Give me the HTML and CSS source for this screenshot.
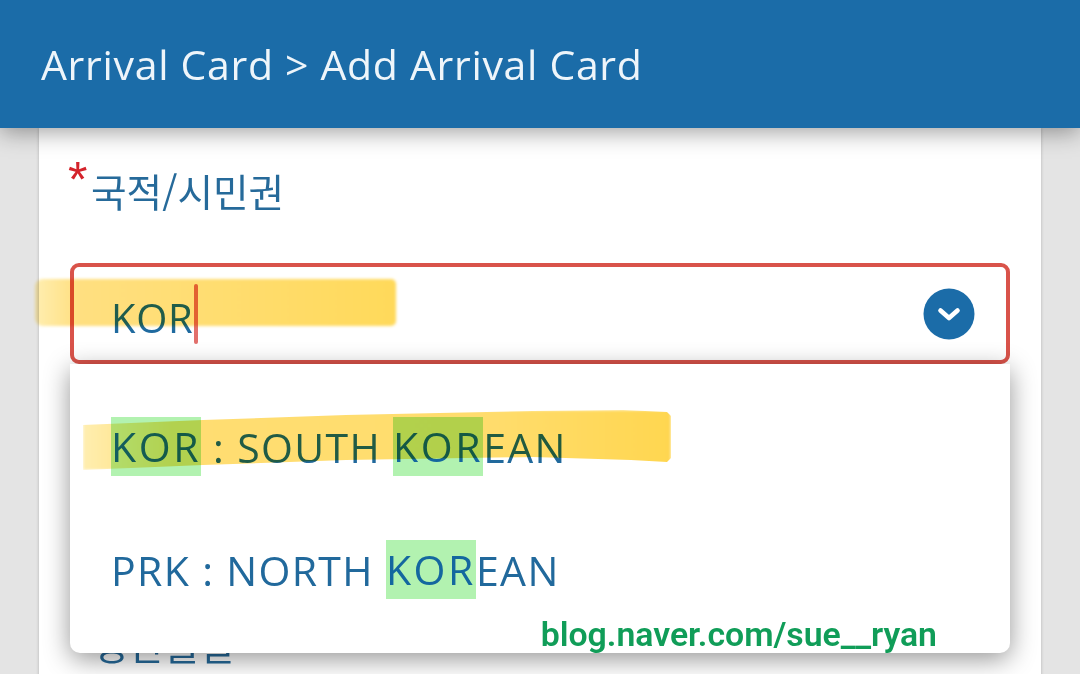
FILE: index.html
```html
<!DOCTYPE html>
<html lang="ko">
<head>
<meta charset="utf-8">
<title>Add Arrival Card</title>
<link rel="stylesheet" href="styles.css">
</head>
<body>
<div class="screen">
  <header class="topbar">Arrival Card &gt; Add Arrival Card</header>
  <main class="card">
    <div class="label"><span class="req">*</span>국적/시민권</div>
    <div class="field-wrap">
      <div class="input">
        <span class="value">KOR<span class="caret"></span></span>
        <svg class="chev" width="52" height="52" viewBox="0 0 52 52" aria-hidden="true">
          <circle cx="26" cy="26" r="25.5" fill="#1b6ca8"/>
          <path d="M17.5 22.5 L26 30 L34.5 22.5" fill="none" stroke="#fff" stroke-width="4.6" stroke-linecap="round" stroke-linejoin="round"/>
        </svg>
      </div>
      <span class="marker marker-a"></span>
      <div class="menu">
        <div class="option"><mark>KOR</mark> : SOUTH <mark>KOR</mark>EAN</div>
        <div class="option"><span class="code">PRK</span> : NORTH <mark>KOR</mark>EAN</div>
        <span class="marker marker-b"></span>
        <span class="credit">blog.naver.com/sue__ryan</span>
      </div>
    </div>
    <div class="label label-next">생년월일</div>
  </main>
</div>
</body>
</html>
```
FILE: styles.css
```css
html, body {
  margin: 0;
  padding: 0;
  background: #e4e4e4;
}
.screen {
  position: relative;
  width: 1080px;
  height: 674px;
  overflow: hidden;
  font-family: "Open Sans", "Noto Sans CJK KR", sans-serif;
  color: #1f6a9f;
}
.topbar {
  position: relative;
  z-index: 3;
  height: 128px;
  box-sizing: border-box;
  padding: 36px 0 0 41px;
  background: #1b6ca8;
  color: #eef5fa;
  font-size: 41px;
  line-height: 56px;
  letter-spacing: 0.68px;
  box-shadow: 0 4px 22px rgba(0, 0, 0, 0.38);
}
.card {
  height: 546px;
  margin: 0 39px;
  padding: 29px 31px 0;
  background: #fff;
  box-shadow: 0 0 3px rgba(0, 0, 0, 0.22);
}
.label {
  height: 106px;
  font-family: "Noto Sans CJK KR", sans-serif;
  font-size: 38.7px;
  line-height: 66px;
  color: #266a9a;
}
.req {
  display: inline-block;
  width: 23px;
  margin-left: -2px;
  color: #d4232b;
  font-family: "Liberation Sans", sans-serif;
  font-size: 50px;
  line-height: 30px;
  vertical-align: 10px;
}
.field-wrap {
  position: relative;
}
.input {
  display: flex;
  align-items: center;
  justify-content: space-between;
  box-sizing: border-box;
  height: 101px;
  padding: 0 31px 0 37px;
  border: 4px solid #d9534a;
  border-radius: 9px;
  background: #fff;
}
.value {
  display: flex;
  align-items: center;
  padding-top: 9px;
  font-size: 40px;
  line-height: 62px;
  letter-spacing: 0.7px;
  color: #1f6a9f;
}
.caret {
  width: 4px;
  height: 60px;
  margin-left: 1px;
  margin-top: -8px;
  border-radius: 2px;
  background: #e2706c;
}
.menu {
  position: absolute;
  z-index: 2;
  top: 101px;
  left: 0;
  width: 940px;
  height: 289px;
  padding-top: 22px;
  box-sizing: border-box;
  border-radius: 0 0 10px 10px;
  background: #fff;
  box-shadow: 0 6px 26px rgba(0, 0, 0, 0.42);
}
.option {
  height: 124px;
  padding-left: 41px;
  font-size: 41px;
  line-height: 124px;
  letter-spacing: 1.35px;
  color: #21699c;
  margin-top: -1px;
}
.option mark {
  display: inline-block;
  height: 59px;
  line-height: 59px;
  background: #b2f2b0;
  color: #14679f;
  font-weight: 500;
  letter-spacing: 2.6px;
  vertical-align: 1px;
}
.marker {
  position: absolute;
  z-index: 3;
  mix-blend-mode: multiply;
  pointer-events: none;
  filter: blur(1.5px);
}
.marker-a {
  left: -35px;
  top: 16px;
  width: 361px;
  height: 47px;
  border-radius: 8px 5px 5px 8px;
  background: linear-gradient(90deg, #ffeeb0 0, #ffdf80 12%, #ffdc6c 60%, #ffd95a 100%);
}
.marker-b {
  left: 13px;
  top: 46px;
  width: 588px;
  height: 60px;
  background: linear-gradient(90deg, #ffeeb0 0, #ffdd72 15%, #ffdc6c 70%, #ffd650 100%);
  clip-path: polygon(0 15px, 120px 10px, 263px 5px, 450px 1px, 540px 0, 584px 2px, 588px 6px, 588px 48px, 584px 52px, 548px 50px, 450px 47px, 263px 50px, 120px 55px, 0 60px);
}
.credit {
  position: absolute;
  right: 73px;
  bottom: 0;
  font-family: Roboto, "Liberation Sans", sans-serif;
  font-weight: 600;
  font-size: 33.8px;
  line-height: 36px;
  color: #109d58;
}
.label-next {
  height: 40px;
  margin-top: 259px;
  padding-left: 22px;
  line-height: 40px;
}
```
